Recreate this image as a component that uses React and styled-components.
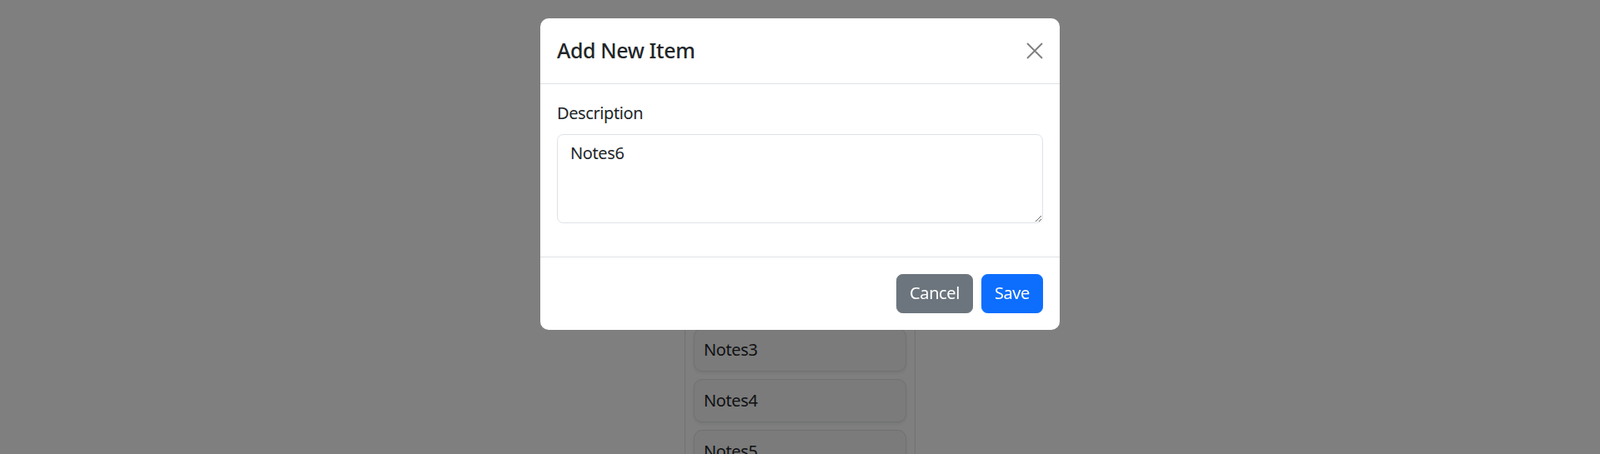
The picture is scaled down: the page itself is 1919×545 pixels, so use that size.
import React, { useState } from 'react';
import styled, { createGlobalStyle } from 'styled-components';

const GlobalStyle = createGlobalStyle`
    html, body {
        margin: 0;
        padding: 0;
        background: #ffffff;
    }
    body {
        font-family: 'Noto Sans', 'Segoe UI', sans-serif;
        font-size: 20px;
        line-height: 1.5;
        letter-spacing: -0.4px;
        color: #212529;
    }
    * {
        box-sizing: border-box;
    }
`;

const Page = styled.div`
    width: 100vw;
    height: 100vh;
    overflow: hidden;
    display: flex;
    justify-content: center;
    padding-top: 261px;
`;

const Board = styled.div`
    width: 277px;
    display: flex;
    flex-direction: column;
    gap: 9px;
    padding: 10px 10px;
    border: 1px solid #dee2e6;
    border-bottom: none;
`;

const NoteCard = styled.div`
    padding: 10px 11px;
    background: #f6f6f6;
    border: 1px solid #dee2e6;
    border-radius: 10px;
    box-shadow: 0 2px 4px rgba(0, 0, 0, 0.08);
    font-size: 20px;
    line-height: 30px;
`;

const Backdrop = styled.div`
    position: fixed;
    inset: 0;
    background: rgba(0, 0, 0, 0.5);
    display: flex;
    justify-content: center;
    align-items: flex-start;
    padding-top: 22px;
`;

const Modal = styled.div`
    width: 623px;
    background: #fff;
    border-radius: 10px;
    display: flex;
    flex-direction: column;
`;

const Header = styled.div`
    display: flex;
    align-items: center;
    padding: 20px;
    border-bottom: 1px solid #dee2e6;
`;

const Title = styled.h5`
    margin: 0;
    font-size: 25px;
    font-weight: 500;
    line-height: 1.5;
    color: #212529;
    flex: 1;
`;

const CloseButton = styled.button`
    width: 20px;
    height: 20px;
    padding: 0;
    border: none;
    background: transparent;
    display: flex;
    align-items: center;
    justify-content: center;
    cursor: pointer;
    opacity: 0.5;
`;

const Body = styled.div`
    padding: 20px;
`;

const Field = styled.div`
    margin-bottom: 20px;
`;

const Label = styled.label`
    display: block;
    margin-bottom: 10px;
    font-size: 20px;
    line-height: 30px;
    color: #212529;
`;

const TextArea = styled.textarea`
    display: block;
    width: 100%;
    height: 107px;
    padding: 7.5px 15px;
    font-family: inherit;
    font-size: 20px;
    line-height: 30px;
    letter-spacing: inherit;
    color: #212529;
    border: 1px solid #dee2e6;
    border-radius: 7.5px;
    resize: vertical;
    outline: none;
`;

const Footer = styled.div`
    display: flex;
    justify-content: flex-end;
    align-items: center;
    padding: 15px;
    border-top: 1px solid #dee2e6;
`;

const Button = styled.button`
    margin: 5px;
    padding: 7.5px 15px;
    font-family: inherit;
    font-size: 20px;
    line-height: 30px;
    letter-spacing: inherit;
    color: #fff;
    background: ${p => (p.$variant === 'primary' ? '#0d6efd' : '#6c757d')};
    border: 1px solid ${p => (p.$variant === 'primary' ? '#0d6efd' : '#6c757d')};
    border-radius: 7.5px;
    cursor: pointer;
`;

const notes = ['Notes1', 'Notes2', 'Notes3', 'Notes4', 'Notes5'];

const App = () => {
    const [text, setText] = useState('Notes6');

    return (
        <>
            <GlobalStyle />
            <Page>
                <Board>
                    {notes.map(n => (
                        <NoteCard key={n}>{n}</NoteCard>
                    ))}
                </Board>
            </Page>
            <Backdrop>
                <Modal>
                    <Header>
                        <Title>Add New Item</Title>
                        <CloseButton aria-label="Close">
                            <svg width="20" height="20" viewBox="0 0 20 20">
                                <path d="M1 1 L19 19 M19 1 L1 19" stroke="#000" strokeWidth="1.8" />
                            </svg>
                        </CloseButton>
                    </Header>
                    <Body>
                        <Field>
                            <Label htmlFor="desc">Description</Label>
                            <TextArea id="desc" rows={3} value={text} onChange={e => setText(e.target.value)} />
                        </Field>
                    </Body>
                    <Footer>
                        <Button>Cancel</Button>
                        <Button $variant="primary">Save</Button>
                    </Footer>
                </Modal>
            </Backdrop>
        </>
    );
};

export default App;
